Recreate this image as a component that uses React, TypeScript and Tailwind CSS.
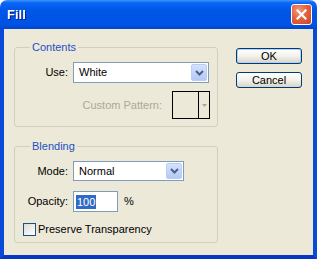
import React from "react";

// XP "Fill" dialog (Photoshop)

const Chevron = () => (
  <svg width="9" height="6" viewBox="0 0 9 6">
    <path d="M1 1 L4.5 4.5 L8 1" fill="none" stroke="#4d6185" strokeWidth="2" />
  </svg>
);

const Select = ({ value, width }: { value: string; width: string }) => (
  <div className={`${width} h-full bg-white border border-[#7f9db9] flex items-center justify-between`}>
    <span className="pl-[5px] text-black">{value}</span>
    <div className="w-[16px] h-[calc(100%-2px)] mr-[1px] rounded-[2px] border border-[#b9cdf5] bg-gradient-to-b from-[#d5e1fd] to-[#b3c9f6] flex items-center justify-center">
      <Chevron />
    </div>
  </div>
);

const GroupBox = ({ title, className, children }: { title: string; className?: string; children: React.ReactNode }) => (
  <div className={`relative border border-[#d0d0bf] rounded-[3px] ${className ?? ""}`}>
    <span className="absolute left-[15px] top-[-8px] px-[2px] bg-[#ece9d8] text-[#1d50c6] leading-[14px]">
      {title}
    </span>
    {children}
  </div>
);

const Button = ({ label, isDefault }: { label: string; isDefault?: boolean }) => (
  <button
    className={`h-[16px] w-full rounded-[3px] border border-[#003c74] bg-gradient-to-b from-[#ffffff] via-[#f3f2ec] to-[#d8d3c7] text-black leading-none flex items-center justify-center ${
      isDefault ? "shadow-[inset_0_0_0_1px_#b6cff3]" : ""
    }`}
  >
    {label}
  </button>
);

export default function App() {
  return (
    <div className="w-[317px] h-[259px] flex flex-col font-['Liberation_Sans',Arial,sans-serif] text-[11px] select-none">
      {/* title bar */}
      <div className="h-[29px] rounded-t-[7px] bg-[linear-gradient(to_bottom,#3d95ff_0%,#0a66f5_10%,#0057e8_35%,#0052e4_85%,#0046cf_100%)] flex items-center justify-between pl-[7px] pr-[5px]">
        <span className="text-white font-bold text-[13px] mt-[1px] drop-shadow-[1px_1px_0_#0a1f8a]">Fill</span>
        <div className="w-[21px] h-[21px] rounded-[3px] border border-white bg-[radial-gradient(circle_at_35%_30%,#f49a7c_0%,#e4623f_45%,#cd4424_100%)] flex items-center justify-center">
          <svg width="11" height="11" viewBox="0 0 11 11">
            <path d="M1.5 1.5 L9.5 9.5 M9.5 1.5 L1.5 9.5" stroke="#fff" strokeWidth="2.2" strokeLinecap="square" />
          </svg>
        </div>
      </div>

      {/* frame + client */}
      <div className="flex-1 flex border-x-4 border-b-4 border-x-[#0a4ad8] border-b-[#0837c4]">
        <div className="flex-1 bg-[#ece9d8] flex pl-[10px] pr-[11px] pt-[18px]">
          <div className="w-[204px] flex flex-col">
            <GroupBox title="Contents" className="pt-[14px] pb-[7px]">
              <div className="flex items-center h-[21px]">
                <span className="w-[53px] text-right text-black">Use:</span>
                <div className="ml-[5px] h-full">
                  <Select value="White" width="w-[136px]" />
                </div>
              </div>
              <div className="flex items-center justify-end h-[28px] mt-[8px] pr-[7px]">
                <span className="text-[#aca899]">Custom Pattern:</span>
                <div className="ml-[10px] w-[38px] h-[28px] border border-black flex">
                  <div className="flex-1 border-r border-black" />
                  <div className="w-[10px] flex items-center justify-center">
                    <svg width="5" height="3" viewBox="0 0 5 3">
                      <path d="M0 0 L5 0 L2.5 3 Z" fill="#aca899" />
                    </svg>
                  </div>
                </div>
              </div>
            </GroupBox>

            <GroupBox title="Blending" className="mt-[19px] pt-[14px] pb-[6px]">
              <div className="flex items-center h-[20px]">
                <span className="w-[53px] text-right text-black">Mode:</span>
                <div className="ml-[5px] h-full">
                  <Select value="Normal" width="w-[111px]" />
                </div>
              </div>
              <div className="flex items-center h-[21px] mt-[10px]">
                <span className="w-[53px] text-right text-black">Opacity:</span>
                <div className="ml-[5px] w-[45px] h-full bg-white border border-[#7f9db9] flex items-center pl-[2px]">
                  <span className="bg-[#316ac5] text-white px-[1px] leading-[14px]">100</span>
                </div>
                <span className="ml-[6px] text-black">%</span>
              </div>
              <div className="flex items-center h-[13px] mt-[11px] pl-[8px]">
                <div className="w-[13px] h-[13px] border border-[#1c5180] bg-gradient-to-br from-[#dcdcd7] to-[#ffffff]" />
                <span className="ml-[2px] text-black">Preserve Transparency</span>
              </div>
            </GroupBox>
          </div>

          <div className="ml-auto w-[66px] flex flex-col gap-[8px] pt-[1px]">
            <Button label="OK" isDefault />
            <Button label="Cancel" />
          </div>
        </div>
      </div>
    </div>
  );
}
